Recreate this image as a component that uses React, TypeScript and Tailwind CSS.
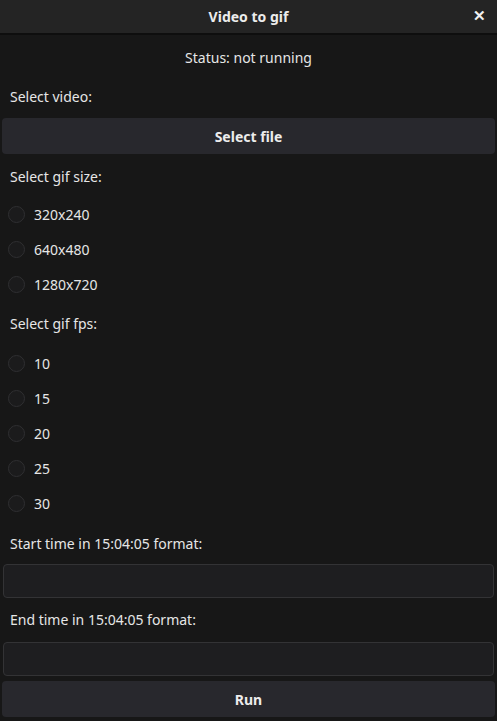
const sizes = ['320x240', '640x480', '1280x720'];
const fpsList = ['10', '15', '20', '25', '30'];

function Radio({ label }: { label: string }) {
  return (
    <div className="flex h-[35px] items-center">
      <span className="ml-[8px] h-[17px] w-[17px] rounded-full border border-[#2f2f31] bg-[#1b1b1c]" />
      <span className="ml-[9px] text-[14px] text-[#e6e6e6]">{label}</span>
    </div>
  );
}

function Label({ children }: { children: React.ReactNode }) {
  return <div className="flex h-[35px] items-center pl-[10px] text-[14px] text-[#e6e6e6]">{children}</div>;
}

export default function App() {
  return (
    <div className="flex h-[721px] w-[497px] flex-col bg-[#171717] font-['Noto_Sans',sans-serif]">
      <div className="relative flex h-[35px] shrink-0 items-center justify-center border-b-2 border-[#0e0e0e] bg-[#242424]">
        <span className="text-[14px] font-bold text-[#ececec]">Video to gif</span>
        <span className="absolute right-[11px] top-[8px] text-[15px] font-bold leading-none text-[#f0f0f0]">✕</span>
      </div>
      <div className="flex flex-col pt-[5px]">
        <div className="flex h-[35px] items-center justify-center text-[14px] text-[#e6e6e6]">Status: not running</div>
        <div className="pt-[4px]">
          <Label>Select video:</Label>
        </div>
        <div className="px-[2px] pt-[4px]">
          <div className="flex h-[36px] items-center justify-center rounded-[4px] bg-[#28282d] text-[14px] font-bold text-[#ececec]">
            Select file
          </div>
        </div>
        <div className="pt-[5px]">
          <Label>Select gif size:</Label>
        </div>
        <div className="pt-[3px]">
          {sizes.map((s) => (
            <Radio key={s} label={s} />
          ))}
        </div>
        <div className="pt-[4px]">
          <Label>Select gif fps:</Label>
        </div>
        <div className="pt-[5px]">
          {fpsList.map((f) => (
            <Radio key={f} label={f} />
          ))}
        </div>
        <div className="pt-[5px]">
          <Label>Start time in 15:04:05 format:</Label>
        </div>
        <div className="px-[3px] pt-[3px]">
          <div className="h-[34px] rounded-[4px] border border-[#333335] bg-[#1e1e20]" />
        </div>
        <div className="pt-[4px]">
          <Label>End time in 15:04:05 format:</Label>
        </div>
        <div className="px-[3px] pt-[5px]">
          <div className="h-[34px] rounded-[4px] border border-[#333335] bg-[#1e1e20]" />
        </div>
        <div className="px-[2px] pt-[5px]">
          <div className="flex h-[36px] items-center justify-center rounded-[4px] bg-[#28282d] text-[14px] font-bold text-[#ececec]">
            Run
          </div>
        </div>
      </div>
    </div>
  );
}
